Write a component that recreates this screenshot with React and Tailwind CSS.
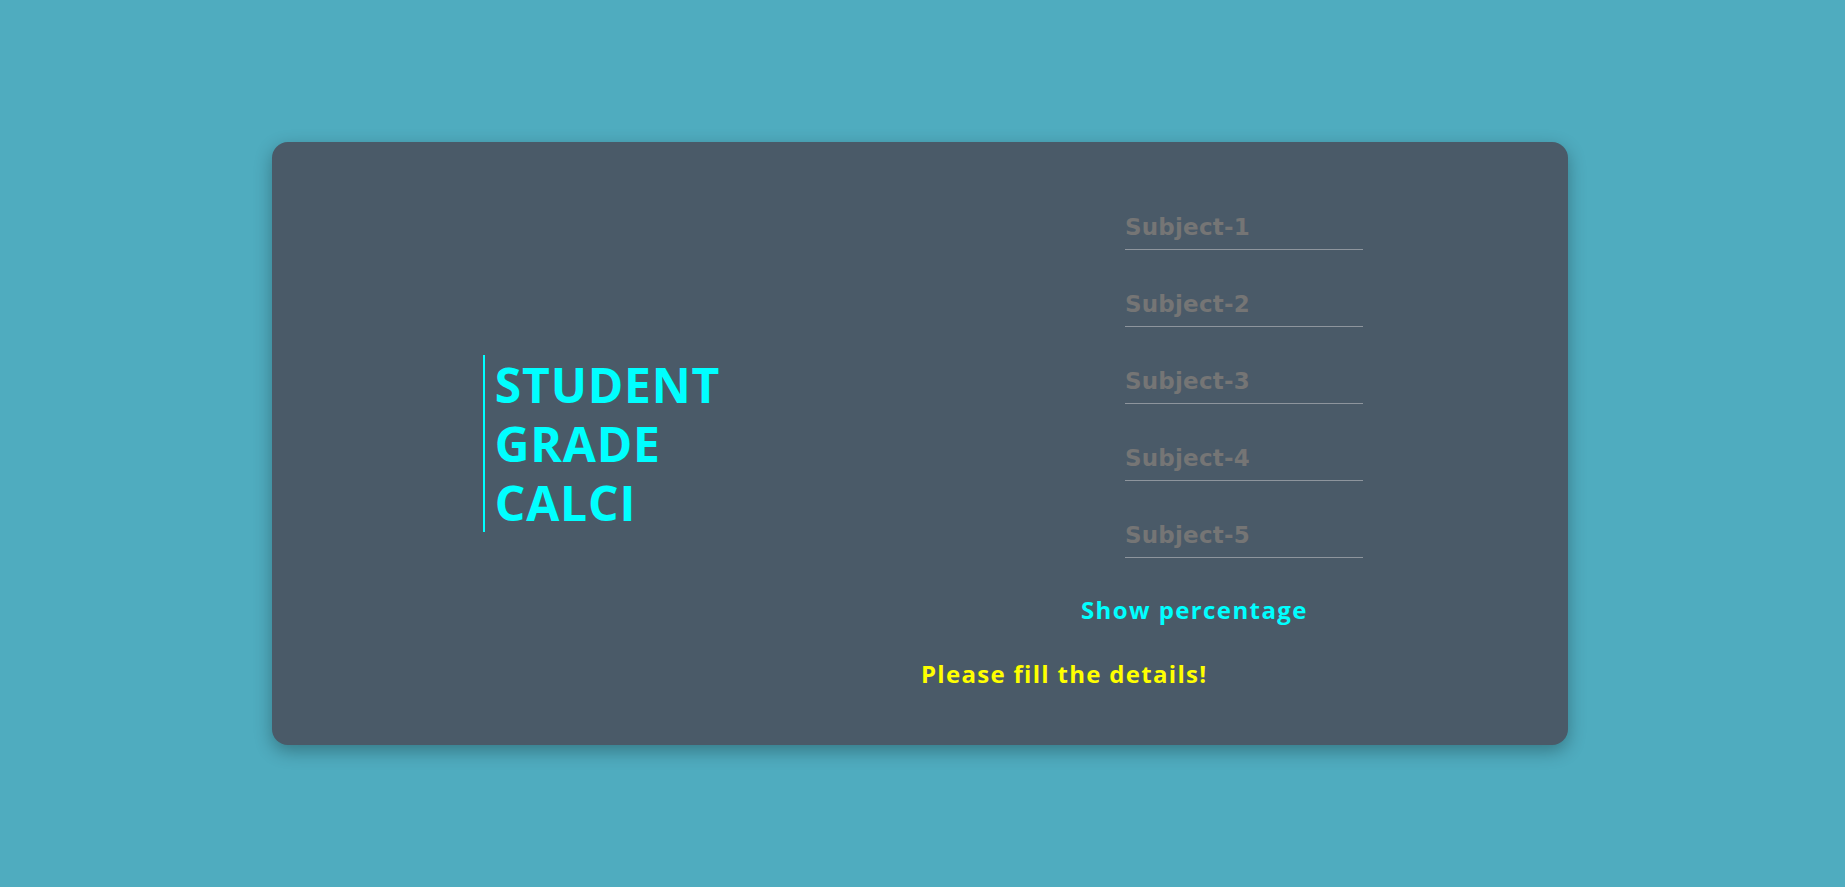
export default function App() {
  const subjects = ["Subject-1", "Subject-2", "Subject-3", "Subject-4", "Subject-5"];
  const trebuchet = { fontFamily: '"Open Sans", "Noto Sans", sans-serif' };
  return (
    <div className="w-full h-[887px] bg-[#4facbf] flex items-center justify-center">
      <div className="w-[1296px] h-[603px] mr-[5px] bg-[#4a5a68] rounded-[16px] shadow-[0_6px_18px_rgba(0,0,0,0.3)] flex">
        <div className="w-[648px] flex items-center justify-center">
          <h1
            className="border-l-2 border-[#00ffff] pl-[10px] text-[#00ffff] text-[48px] leading-[59px] font-bold tracking-[0.8px] ml-[11px]"
            style={trebuchet}
          >
            STUDENT
            <br />
            GRADE
            <br />
            CALCI
          </h1>
        </div>
        <div className="w-[648px] flex flex-col pt-[67px]">
          <div className="flex flex-col gap-[36px] ml-[205px] w-[238px]">
            {subjects.map((s) => (
              <input
                key={s}
                type="text"
                placeholder={s}
                className="h-[41px] w-[238px] pb-[4px] bg-transparent border-b border-[#8e959d] outline-none text-[23px] font-bold tracking-[0.2px] text-white placeholder:text-[#757575]"
                style={{ fontFamily: '"DejaVu Sans", sans-serif' }}
              />
            ))}
          </div>
          <button
            className="self-start ml-[161px] mt-[38px] text-[24px] leading-[28px] font-bold tracking-[1.4px] text-[#00ffff] bg-transparent"
            style={trebuchet}
          >
            Show percentage
          </button>
          <p
            className="self-start ml-[1px] mt-[36px] text-[24px] leading-[28px] font-bold tracking-[1.3px] text-[#ffff00]"
            style={trebuchet}
          >
            Please fill the details!
          </p>
        </div>
      </div>
    </div>
  );
}
